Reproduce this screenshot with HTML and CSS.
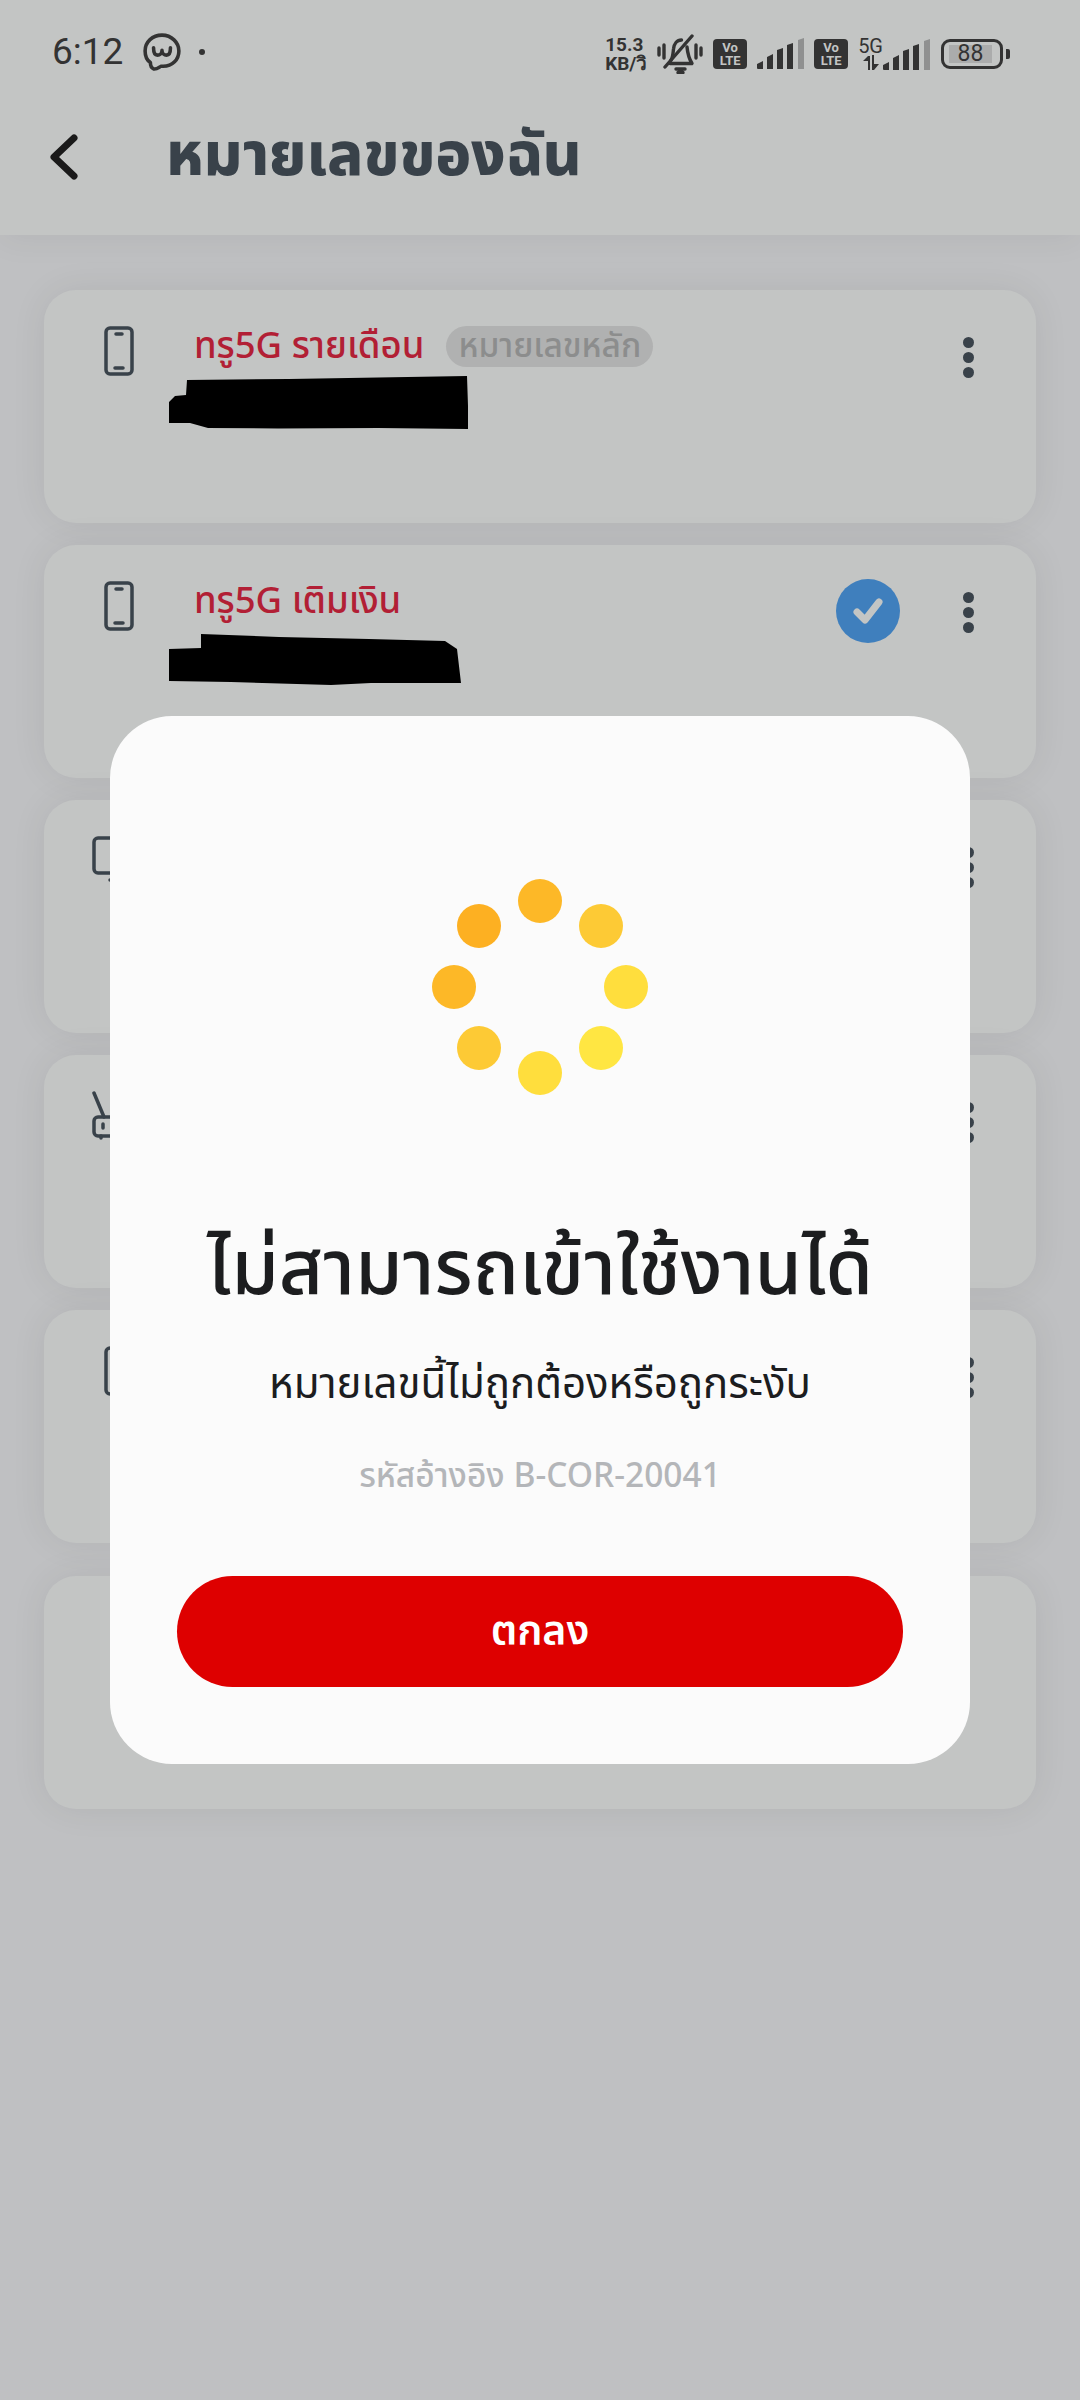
FILE: index.html
```html
<!DOCTYPE html>
<html lang="th">
<head>
    <meta charset="UTF-8">
    <meta name="viewport" content="width=device-width, initial-scale=1.0">
    <title>หมายเลขของฉัน</title>
    <link rel="stylesheet" href="styles.css">
</head>
<body>
    <div class="top-area">
        <div class="status-bar">
            <div class="status-left">
                <span class="clock">6:12</span>
                <svg class="app-mark" width="38" height="38" viewBox="0 0 36 36" fill="none" stroke="#333" stroke-width="3.400" stroke-linecap="round" stroke-linejoin="round">
                    <path d="M18 2C9 2 2 8.500 2 17c0 5 2 9 5 11 0 2 .5 5 3 6 3 .6 5-1.500 7-2.500h2c9 0 15-6.500 15-14.500S27 2 18 2z"/>
                    <path d="M10 14c0 5 1.500 7 3.700 7 2 0 4.300-1.500 4.300-4.500 0 3 2.300 4.500 4.300 4.500 2.200 0 3.700-2 3.700-7"/>
                </svg>
                <span class="status-dot"></span>
            </div>
            <div class="status-right">
                <div class="net-speed"><span>15.3</span><span>KB/วิ</span></div>
                <svg class="bell" width="46" height="40" viewBox="0 0 46 40" fill="none" stroke="#333" stroke-width="3.400" stroke-linecap="round" stroke-linejoin="round">
                    <path d="M2 14v7M7 11v13M39 11v13M44 14v7"/>
                    <path d="M35 2 8 33"/>
                    <path d="M14 26c2-3 2-7 2.500-11 .5-5 3.500-9 8-9M30 13c.5 5 1 10 5 16.500H13"/>
                    <path d="M19 35h9M21 38.500h5"/>
                </svg>
                <div class="volte"><span>Vo</span><span>LTE</span></div>
                <svg width="47" height="32" viewBox="0 0 47 32">
                    <path fill="#333" d="M0 26 6 23v8H1a1 1 0 0 1-1-1zM10 19l6-3v15h-6zM20 12l6-2v21h-6zM30 7l6-2v26h-6z"/>
                    <path fill="#8f9090" d="M41 2l6-2v31h-6z"/>
                </svg>
                <div class="volte"><span>Vo</span><span>LTE</span></div>
                <div class="sim-two">
                    <div class="sim-net">
                        <span class="five-g">5G</span>
                        <svg width="16" height="16" viewBox="0 0 16 16"><path fill="#333" d="M5 1h2v14H5V6H0zM9 0h2v9h5l-5 6H9z"/></svg>
                    </div>
                    <svg width="47" height="32" viewBox="0 0 47 32">
                        <path fill="#333" d="M0 26 6 23v8H1a1 1 0 0 1-1-1zM10 19l6-3v15h-6zM20 12l6-2v21h-6zM30 7l6-2v26h-6z"/>
                        <path fill="#8f9090" d="M41 2l6-2v31h-6z"/>
                    </svg>
                </div>
                <div class="battery-wrap">
                    <div class="battery"><div class="battery-level">88</div></div>
                    <div class="battery-nub"></div>
                </div>
            </div>
        </div>
        <div class="title-row">
            <svg class="back" width="30" height="46" viewBox="0 0 30 46" fill="none" stroke="#1a1a1a" stroke-width="7" stroke-linecap="round" stroke-linejoin="round"><path d="M25 4 5 23l20 19"/></svg>
            <h1 class="page-title">หมายเลขของฉัน</h1>
        </div>
    </div>

    <div class="number-list">
        <div class="number-card">
            <svg class="line-icon" width="30" height="50" viewBox="0 0 30 50" fill="none" stroke="#39424a" stroke-width="3.500" stroke-linecap="round"><rect x="2" y="2" width="26" height="46" rx="4"/><path d="M12 8h6M11 42h8"/></svg>
            <div class="card-text">
                <div class="plan-row">
                    <span class="plan-name">ทรู5G รายเดือน</span>
                    <span class="main-tag">หมายเลขหลัก</span>
                </div>
                <svg class="scribble" width="300" height="54" viewBox="0 0 300 54"><path d="M18 4 120 3 298 0l1 30v23l-90-1-100 .500-70-.500-18-5H0V26l6-6 11-1z"/></svg>
            </div>
            <div class="kebab"><span></span><span></span><span></span></div>
        </div>

        <div class="number-card">
            <svg class="line-icon" width="30" height="50" viewBox="0 0 30 50" fill="none" stroke="#39424a" stroke-width="3.500" stroke-linecap="round"><rect x="2" y="2" width="26" height="46" rx="4"/><path d="M12 8h6M11 42h8"/></svg>
            <div class="card-text">
                <div class="plan-row">
                    <span class="plan-name">ทรู5G เติมเงิน</span>
                </div>
                <svg class="scribble" width="292" height="54" viewBox="0 0 292 54"><path d="M32 3 110 6 200 8l76 2 12 8 4 34-90 0-40 2-100-3-62-1V18l32-1z"/></svg>
            </div>
            <svg class="selected-badge" width="64" height="64" viewBox="0 0 64 64"><circle cx="32" cy="32" r="32" fill="#3f7fbd"/><path d="M21 33l8 8 14-18" fill="none" stroke="#c3c5c4" stroke-width="7" stroke-linecap="round" stroke-linejoin="round"/></svg>
            <div class="kebab"><span></span><span></span><span></span></div>
        </div>

        <div class="number-card">
            <svg class="wide-icon" width="60" height="50" viewBox="0 0 60 50" fill="none" stroke="#39424a" stroke-width="3.500" stroke-linecap="round"><rect x="2" y="2" width="54" height="35" rx="4"/><path d="M18 44h22"/></svg>
            <div class="card-text"></div>
            <div class="kebab"><span></span><span></span><span></span></div>
        </div>

        <div class="number-card">
            <svg class="wide-icon" width="60" height="50" viewBox="0 0 60 50" fill="none" stroke="#39424a" stroke-width="3.500" stroke-linecap="round"><path d="M2 2l10 24"/><rect x="2" y="26" width="46" height="19" rx="4"/><path d="M11 33v4M20 33v4M9 45v2"/></svg>
            <div class="card-text"></div>
            <div class="kebab"><span></span><span></span><span></span></div>
        </div>

        <div class="number-card">
            <svg class="line-icon" width="30" height="50" viewBox="0 0 30 50" fill="none" stroke="#39424a" stroke-width="3.500" stroke-linecap="round"><rect x="2" y="2" width="26" height="46" rx="4"/><path d="M12 8h6M11 42h8"/></svg>
            <div class="card-text"></div>
            <div class="kebab"><span></span><span></span><span></span></div>
        </div>

        <div class="number-card last-card"></div>
    </div>

    <!-- error dialog -->
    <div class="modal">
        <svg class="spinner" width="216" height="216" viewBox="0 0 216 216">
            <circle cx="108" cy="22" r="22" fill="#fdb827"/>
            <circle cx="169" cy="47" r="22" fill="#fdca35"/>
            <circle cx="194" cy="108" r="22" fill="#ffde3d"/>
            <circle cx="169" cy="169" r="22" fill="#ffe642"/>
            <circle cx="108" cy="194" r="22" fill="#ffde3d"/>
            <circle cx="47" cy="169" r="22" fill="#fdca35"/>
            <circle cx="22" cy="108" r="22" fill="#fdb827"/>
            <circle cx="47" cy="47" r="22" fill="#fdb022"/>
        </svg>
        <h2 class="modal-title">ไม่สามารถเข้าใช้งานได้</h2>
        <p class="modal-text">หมายเลขนี้ไม่ถูกต้องหรือถูกระงับ</p>
        <p class="modal-ref">รหัสอ้างอิง B-COR-20041</p>
        <button class="modal-button">ตกลง</button>
    </div>
</body>
</html>
```

FILE: styles.css
```css
* {
    margin: 0;
    padding: 0;
    box-sizing: border-box;
}

body {
    width: 1080px;
    height: 2400px;
    position: relative;
    overflow: hidden;
    background: #bfc0c2;
    font-family: "Noto Sans Thai", "Inter", "Noto Sans", "Liberation Sans", sans-serif;
}

.top-area {
    height: 235px;
    background: #c3c5c4;
    box-shadow: 0 6px 30px rgba(0, 0, 0, 0.05);
    position: relative;
}

.status-bar {
    height: 104px;
    padding: 30px 70px 0 52px;
    display: flex;
    justify-content: space-between;
    align-items: flex-start;
    color: #333;
}

.status-left {
    display: flex;
    align-items: center;
    gap: 20px;
}

.clock {
    font-family: Roboto, sans-serif;
    font-size: 37px;
    line-height: 44px;
}

.status-dot {
    width: 6px;
    height: 6px;
    margin-left: -2px;
    border-radius: 50%;
    background: #333;
}

.status-right {
    display: flex;
    align-items: center;
    gap: 10px;
    margin-top: 4px;
}

.net-speed {
    width: 42px;
    display: flex;
    flex-direction: column;
    font-family: Roboto, sans-serif;
    font-size: 19px;
    line-height: 19px;
    font-weight: 700;
    white-space: nowrap;
}

.volte {
    width: 34px;
    height: 30px;
    border-radius: 4px;
    background: #333;
    color: #c3c5c4;
    display: flex;
    flex-direction: column;
    align-items: center;
    justify-content: center;
    font-family: Roboto, sans-serif;
    font-size: 13px;
    line-height: 13px;
    font-weight: 700;
}

.sim-two {
    display: flex;
    align-items: flex-end;
}

.sim-net {
    display: flex;
    flex-direction: column;
    align-items: center;
}

.five-g {
    font-family: Roboto, sans-serif;
    font-size: 20px;
    line-height: 18px;
}

.battery-wrap {
    display: flex;
    align-items: center;
    gap: 3px;
    margin-left: 1px;
}

.battery {
    width: 62px;
    height: 30px;
    padding: 3px 8px 3px 5px;
    border: 3px solid #333;
    border-radius: 9px;
}

.battery-level {
    height: 100%;
    background: #abacac;
    font-family: Roboto, sans-serif;
    font-size: 23px;
    line-height: 18px;
    text-align: center;
    color: #333;
}

.battery-nub {
    width: 4px;
    height: 10px;
    border-radius: 0 2px 2px 0;
    background: #333;
}

.title-row {
    display: flex;
    align-items: center;
    padding-left: 49px;
    height: 106px;
}

.page-title {
    margin-left: 87px;
    font-size: 59.500px;
    font-weight: 800;
    color: #39424a;
}

.number-list {
    padding: 55px 44px 0;
    display: flex;
    flex-direction: column;
    gap: 22px;
}

.number-card {
    height: 233px;
    padding: 36px 61px 0 60px;
    background: #c3c5c4;
    border-radius: 32px;
    box-shadow: 0 0 36px rgba(0, 0, 0, 0.07);
    display: flex;
    align-items: flex-start;
}

.last-card {
    margin-top: 11px;
}

.wide-icon {
    margin-left: -12px;
    margin-right: -18px;
}

.card-text {
    flex: 1;
    padding-left: 35px;
}

.plan-row {
    display: flex;
    align-items: center;
    height: 41px;
    gap: 22px;
    padding-left: 25px;
}

.plan-name {
    font-size: 36.500px;
    font-weight: 500;
    color: #b21f35;
}

.main-tag {
    height: 41px;
    line-height: 41px;
    padding: 0 12px;
    border-radius: 21px;
    background: #b0b1b1;
    color: #8c8d8d;
    font-size: 33.500px;
    font-weight: 500;
}

.scribble {
    display: block;
    margin-top: 9px;
}

.selected-badge {
    margin: -2px 63px 0 0;
}

.kebab {
    width: 12px;
    margin-top: 11px;
    display: flex;
    flex-direction: column;
    gap: 4px;
}

.kebab span {
    width: 11px;
    height: 11px;
    border-radius: 50%;
    background: #39424a;
}

.modal {
    position: absolute;
    top: 716px;
    left: 110px;
    width: 860px;
    height: 1048px;
    padding-top: 164px;
    background: #fbfbfb;
    border-radius: 62px;
    display: flex;
    flex-direction: column;
    align-items: center;
}

.spinner {
    display: block;
    margin-top: -1px;
}

.modal-title {
    margin-top: 126px;
    font-size: 76.500px;
    line-height: 100px;
    font-weight: 500;
    color: #1c1d1f;
}

.modal-text {
    margin-top: 36px;
    font-size: 42px;
    line-height: 56px;
    color: #1c1d1f;
}

.modal-ref {
    margin-top: 42px;
    font-size: 33.500px;
    line-height: 44px;
    font-weight: 500;
    color: #b4b6b9;
}

.modal-button {
    margin-top: 77px;
    width: 726px;
    height: 111px;
    border: none;
    border-radius: 56px;
    background: #de0000;
    color: #fff;
    font-family: inherit;
    font-size: 41px;
    font-weight: 600;
}
```
